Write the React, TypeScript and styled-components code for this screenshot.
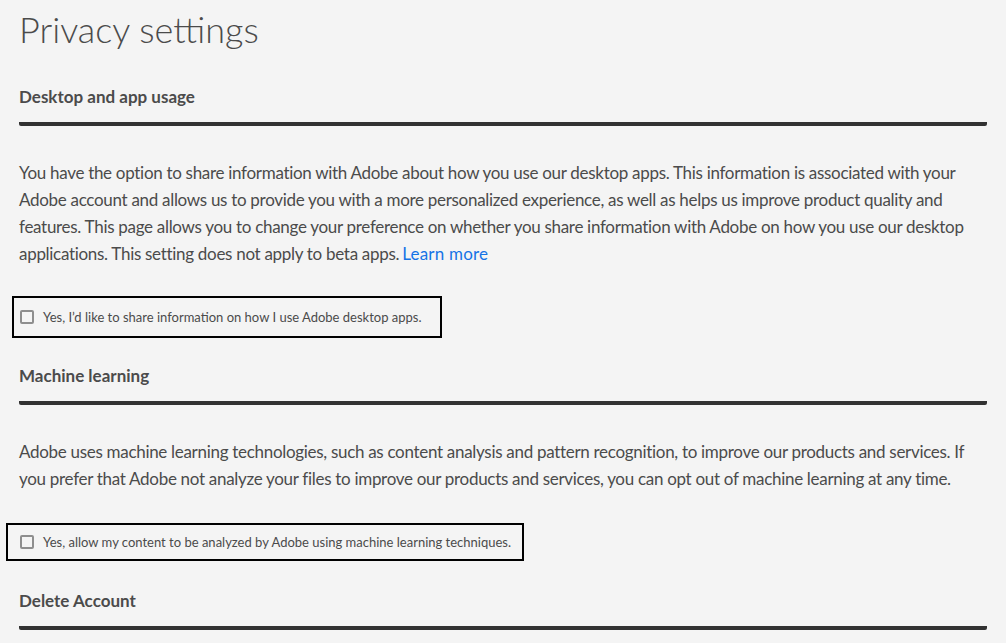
import styled, { createGlobalStyle } from 'styled-components';

const GlobalStyle = createGlobalStyle`
  body {
    margin: 0;
    background: #f4f4f4;
    font-family: Lato, 'Liberation Sans', sans-serif;
    color: #4b4b4b;
  }
`;

const Page = styled.main`
  padding: 0 19px;
  width: 968px;
`;

const Title = styled.h1`
  margin: 0;
  padding-top: 4px;
  font-size: 36px;
  font-weight: 300;
  line-height: 50px;
  color: #4b4b4b;
`;

const Section = styled.section<{ $top: number }>`
  padding-top: ${(p) => p.$top}px;
`;

const SectionHeader = styled.h2`
  margin: 0;
  font-size: 17px;
  font-weight: 700;
  line-height: 24px;
  color: #4b4b4b;
  padding-bottom: 13px;
  border-bottom: 4px solid #323232;
  border-radius: 0 0 2px 2px;
`;

const Paragraph = styled.p`
  margin: 33px 0 0;
  font-size: 17px;
  letter-spacing: -0.3px;
  line-height: 27px;
  color: #4b4b4b;
`;

const Link = styled.a`
  display: inline-block;
  margin-left: 3px;
  letter-spacing: 0.2px;
  color: #1473e6;
  text-decoration: none;
`;

const OptionRow = styled.div<{ $top: number }>`
  padding-top: ${(p) => p.$top}px;
`;

const OptionBox = styled.label<{ $shift: number; $height: number; $right: number }>`
  display: inline-flex;
  align-items: center;
  gap: 9px;
  height: ${(p) => p.$height}px;
  margin-left: ${(p) => -p.$shift}px;
  padding: 0 ${(p) => p.$right}px 0 ${(p) => p.$shift - 1}px;
  border: 2px solid #000;
  font-size: 13px;
  color: #4b4b4b;
  cursor: pointer;
`;

const Box = styled.span`
  flex: none;
  width: 10px;
  height: 10px;
  border: 2px solid #8e8e8e;
  border-radius: 2px;
  background: #f4f4f4;
`;

function App() {
  return (
    <>
      <GlobalStyle />
      <Page>
        <Title>Privacy settings</Title>
        <Section $top={31}>
          <SectionHeader>Desktop and app usage</SectionHeader>
          <Paragraph>
            You have the option to share information with Adobe about how you use our desktop apps. This information is
            associated with your Adobe account and allows us to provide you with a more personalized experience, as well as
            helps us improve product quality and features. This page allows you to change your preference on whether you
            share information with Adobe on how you use our desktop applications. This setting does not apply to beta
            apps.<Link href="#">Learn more</Link>
          </Paragraph>
          <OptionRow $top={29}>
            <OptionBox $shift={7} $height={38} $right={18}>
              <Box />
              Yes, I’d like to share information on how I use Adobe desktop apps.
            </OptionBox>
          </OptionRow>
        </Section>
        <Section $top={26}>
          <SectionHeader>Machine learning</SectionHeader>
          <Paragraph>
            Adobe uses machine learning technologies, such as content analysis and pattern recognition, to improve our
            products and services. If you prefer that Adobe not analyze your files to improve our products and services, you
            can opt out of machine learning at any time.
          </Paragraph>
          <OptionRow $top={31}>
            <OptionBox $shift={13} $height={34} $right={11}>
              <Box />
              Yes, allow my content to be analyzed by Adobe using machine learning techniques.
            </OptionBox>
          </OptionRow>
        </Section>
        <Section $top={28}>
          <SectionHeader>Delete Account</SectionHeader>
        </Section>
      </Page>
    </>
  );
}

export default App;
